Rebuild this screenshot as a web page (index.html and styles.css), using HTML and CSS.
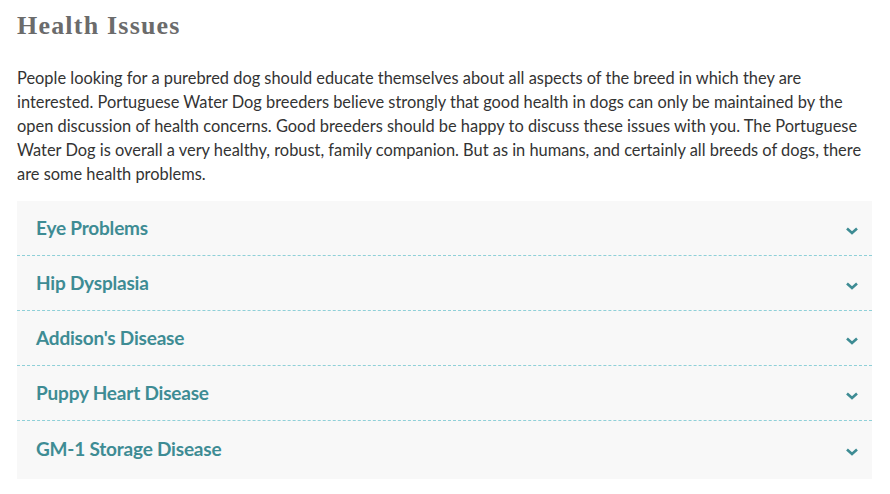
FILE: index.html
```html
<!DOCTYPE html>
<html>
<head>
<meta charset="utf-8">
<link rel="stylesheet" href="styles.css">
</head>
<body>
<div class="page">
  <h2 class="heading">Health Issues</h2>
  <p class="intro">People looking for a purebred dog should educate themselves about all aspects of the breed in which they are interested. Portuguese Water Dog breeders believe strongly that good health in dogs can only be maintained by the open discussion of health concerns. Good breeders should be happy to discuss these issues with you. The Portuguese Water Dog is overall a very healthy, robust, family companion. But as in humans, and certainly all breeds of dogs, there are some health problems.</p>
  <div class="accordion">
    <div class="item"><span class="title">Eye Problems</span><svg class="chev" viewBox="0 0 12 8"><path d="M1 1.5 L6 6 L11 1.5"/></svg></div>
    <div class="item"><span class="title">Hip Dysplasia</span><svg class="chev" viewBox="0 0 12 8"><path d="M1 1.5 L6 6 L11 1.5"/></svg></div>
    <div class="item"><span class="title">Addison's Disease</span><svg class="chev" viewBox="0 0 12 8"><path d="M1 1.5 L6 6 L11 1.5"/></svg></div>
    <div class="item"><span class="title">Puppy Heart Disease</span><svg class="chev" viewBox="0 0 12 8"><path d="M1 1.5 L6 6 L11 1.5"/></svg></div>
    <div class="item"><span class="title">GM-1 Storage Disease</span><svg class="chev" viewBox="0 0 12 8"><path d="M1 1.5 L6 6 L11 1.5"/></svg></div>
  </div>
</div>
</body>
</html>
```
FILE: styles.css
```css
html, body { margin: 0; padding: 0; background: #fff; }
.page { padding: 10px 18px 0 17px; width: 855px; }
.heading {
  margin: 0;
  font-family: "Liberation Serif", serif;
  font-weight: bold;
  font-size: 26px;
  line-height: 32px;
  letter-spacing: 1.2px;
  color: #6b6b6b;
}
.intro {
  margin: 24px 0 15px;
  font-family: Lato, sans-serif;
  font-size: 16.4px;
  line-height: 24px;
  color: #333;
}
.accordion { background: #f8f8f8; padding-bottom: 3px; }
.item {
  height: 54px;
  display: flex;
  align-items: center;
  justify-content: space-between;
  padding: 0 14px 0 19px;
  border-bottom: 1px dashed #8fd0d8;
}
.item:last-child { border-bottom: none; height: 55px; }
.title {
  font-family: Lato, sans-serif;
  font-weight: bold;
  font-size: 19px;
  color: #3e8c94;
  letter-spacing: -0.2px;
  margin-top: -1px;
}
.chev { width: 12px; height: 8px; margin-top: 6px; }
.chev path { fill: none; stroke: #3e8c94; stroke-width: 2.6; }
```
